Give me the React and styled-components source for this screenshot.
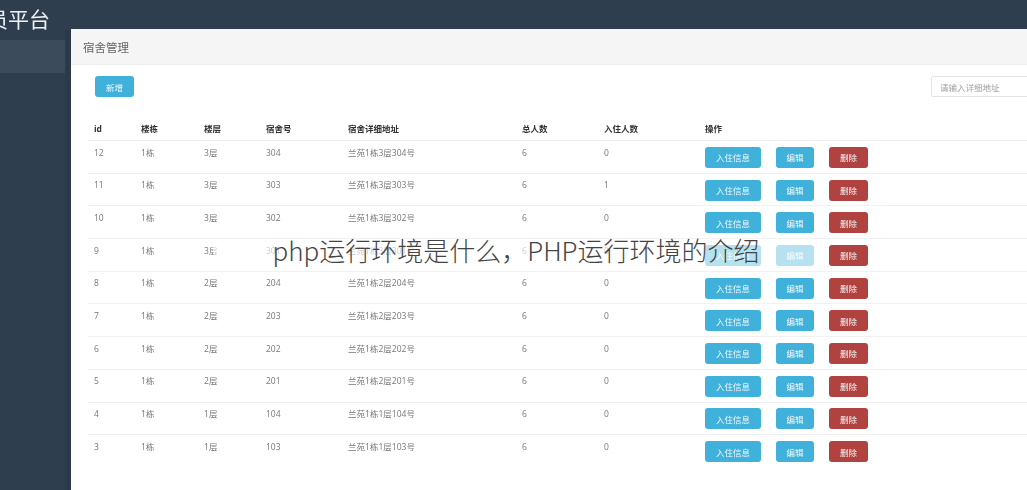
import React from 'react';
import styled, { createGlobalStyle } from 'styled-components';

const rows = [
  [12, 1, 3, 304, 0],
  [11, 1, 3, 303, 1],
  [10, 1, 3, 302, 0],
  [9, 1, 3, 301, 0],
  [8, 1, 2, 204, 0],
  [7, 1, 2, 203, 0],
  [6, 1, 2, 202, 0],
  [5, 1, 2, 201, 0],
  [4, 1, 1, 104, 0],
  [3, 1, 1, 103, 0],
];

const headers = ['id', '楼栋', '楼层', '宿舍号', '宿舍详细地址', '总人数', '入住人数', '操作'];

const GlobalStyle = createGlobalStyle`
  html, body {
    margin: 0;
    padding: 0;
    overflow: hidden;
  }
  body {
    font-family: "Open Sans", "Noto Sans CJK SC", sans-serif;
    background: #2f3e4e;
  }
`;

const Page = styled.div`
  position: relative;
  width: 1027px;
  height: 490px;
  overflow: hidden;
  display: grid;
  grid-template-columns: 71px 1fr;
  grid-template-rows: 29px 1fr;
  background: #2f3e4e;
`;

const Brand = styled.div`
  grid-column: 1 / 3;
  height: 40px;
  margin-left: -13px;
  font-size: 21px;
  line-height: 37px;
  color: #eef1f4;
  white-space: nowrap;
  font-family: "Noto Sans CJK SC", sans-serif;
  filter: blur(0.4px);
`;

const Sidebar = styled.aside`
  padding-top: 11px;
  background: #2f3e4e;
  border-right: 6px solid #2b3948;
  box-sizing: border-box;
`;

const MenuItem = styled.div`
  height: 33px;
  background: #3b4b5c;
`;

const Main = styled.main`
  background: #fff;
  min-width: 0;
`;

const PanelHead = styled.div`
  height: 36px;
  padding-left: 12px;
  box-sizing: border-box;
  display: flex;
  align-items: center;
  background: #f5f5f5;
  border-bottom: 1px solid #eeeeee;
  font-size: 11.5px;
  color: #666;
  filter: blur(0.4px);
`;

const Toolbar = styled.div`
  display: flex;
  justify-content: space-between;
  align-items: center;
  margin-top: 11px;
  padding-left: 24px;
  filter: blur(0.4px);
`;

const Search = styled.div`
  width: 110px;
  height: 21px;
  margin-right: -14px;
  padding-left: 8px;
  box-sizing: border-box;
  display: flex;
  align-items: center;
  border: 1px solid #e4e4e4;
  border-radius: 2px;
  font-size: 8.5px;
  color: #a0a0a0;
`;

const Button = styled.button`
  width: ${(p) => p.$w}px;
  height: 21px;
  padding: 0;
  border: none;
  border-radius: 3px;
  background: ${(p) => (p.$danger ? '#b04240' : '#3fb1da')};
  color: #f4f8fa;
  font: 8.5px "Noto Sans CJK SC", sans-serif;
`;

const Table = styled.div`
  margin: 22px 0 0 17px;
  font-size: 8.5px;
  filter: blur(0.4px);
`;

const Row = styled.div`
  display: grid;
  grid-template-columns: 47px 63px 62px 82px 174px 82px 101px 1fr;
  align-items: center;
  height: ${(p) => (p.$head ? 21 : 32.7)}px;
  padding-left: 6px;
  box-sizing: border-box;
  border-top: ${(p) => (p.$head ? 'none' : '1px solid #f1f1f1')};
  color: ${(p) => (p.$head ? '#333' : '#777')};
  font-weight: ${(p) => (p.$head ? 700 : 400)};
`;

const Cell = styled.div`
  white-space: nowrap;
  line-height: 1;
  margin-top: ${(p) => (p.$head ? 0 : -8)}px;
`;

const Actions = styled.div`
  display: flex;
  gap: 15px;
  margin-top: 1px;
`;

const Caption = styled.div`
  position: absolute;
  left: 213px;
  top: 239px;
  width: 606px;
  height: 28px;
  padding-bottom: 8px;
  box-sizing: border-box;
  display: flex;
  align-items: center;
  justify-content: center;
  background: rgba(255, 255, 255, 0.62);
  color: #444;
  font: 300 26px "Noto Sans CJK SC", sans-serif;
  white-space: nowrap;
`;

export default function App() {
  return (
    <Page>
      <GlobalStyle />
      <Brand>员平台</Brand>
      <Sidebar>
        <MenuItem />
      </Sidebar>
      <Main>
        <PanelHead>宿舍管理</PanelHead>
        <Toolbar>
          <Button $w={39}>新增</Button>
          <Search>请输入详细地址</Search>
        </Toolbar>
        <Table>
          <Row $head>
            {headers.map((h) => (
              <Cell $head key={h}>{h}</Cell>
            ))}
          </Row>
          {rows.map(([id, building, floor, room, count]) => (
            <Row key={id}>
              <Cell>{id}</Cell>
              <Cell>{building}栋</Cell>
              <Cell>{floor}层</Cell>
              <Cell>{room}</Cell>
              <Cell>兰苑{building}栋{floor}层{room}号</Cell>
              <Cell>6</Cell>
              <Cell>{count}</Cell>
              <Actions>
                <Button $w={56}>入住信息</Button>
                <Button $w={38}>编辑</Button>
                <Button $w={39} $danger>删除</Button>
              </Actions>
            </Row>
          ))}
        </Table>
      </Main>
      <Caption>php运行环境是什么，PHP运行环境的介绍</Caption>
    </Page>
  );
}
